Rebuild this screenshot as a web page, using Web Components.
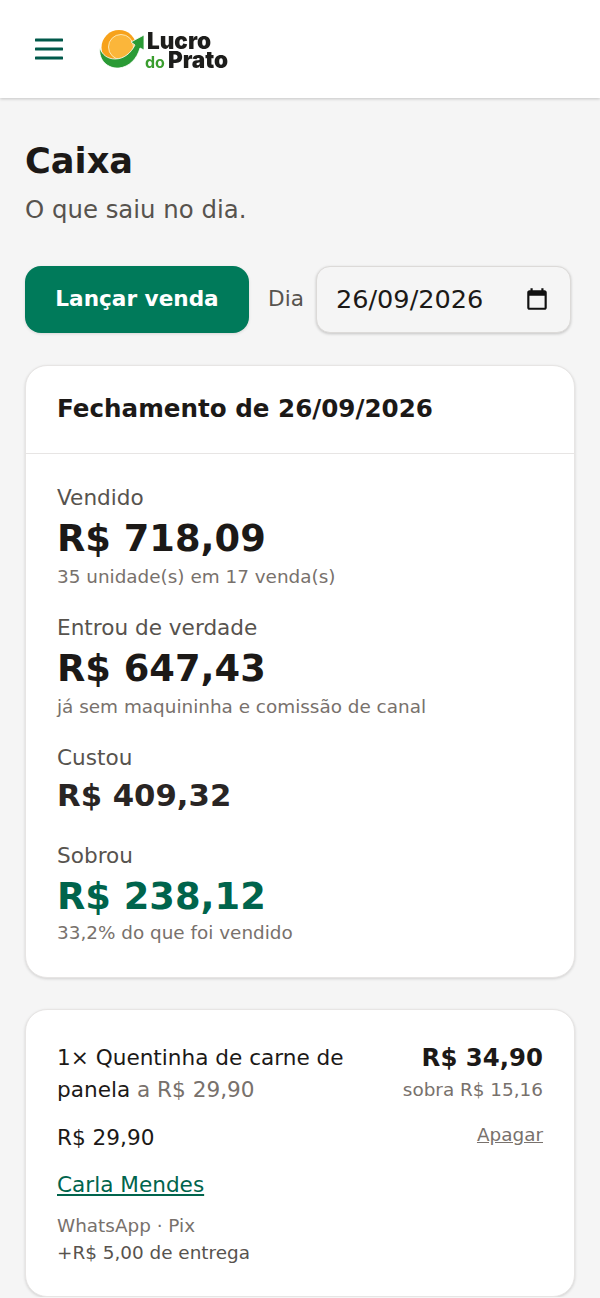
<!DOCTYPE html>
<html lang="pt-BR">
<head>
<meta charset="utf-8">
<title>Caixa</title>
<style>
  html, body { margin: 0; background: #f5f5f5; }
  body { font-family: "DejaVu Sans", sans-serif; color: #1c1917; }
</style>
</head>
<body>
<app-header></app-header>
<main-page>
  <page-title title-text="Caixa" sub="O que saiu no dia."></page-title>
  <cash-toolbar date="26/09/2026"></cash-toolbar>
  <closing-card date="26/09/2026">
    <closing-stat label="Vendido" value="R$ 718,09" note="35 unidade(s) em 17 venda(s)"></closing-stat>
    <closing-stat label="Entrou de verdade" value="R$ 647,43" note="já sem maquininha e comissão de canal"></closing-stat>
    <closing-stat label="Custou" value="R$ 409,32" kind="small"></closing-stat>
    <closing-stat label="Sobrou" value="R$ 238,12" note="33,2% do que foi vendido" kind="green"></closing-stat>
  </closing-card>
  <sale-card></sale-card>
</main-page>

<script>
class AppHeader extends HTMLElement {
    constructor() {
        super();
        this.attachShadow({ mode: 'open' });
    }

    connectedCallback() {
        this.shadowRoot.innerHTML = `
            <style>
                :host {
                    display: flex;
                    align-items: center;
                    gap: 36px;
                    height: 98px;
                    padding-left: 35px;
                    background: #fff;
                    box-shadow: 0 1px 3px rgba(0, 0, 0, .2);
                    box-sizing: border-box;
                }
                .menu { width: 28px; height: 22px; display: block; }
                .logo { display: flex; align-items: center; filter: blur(.3px); }
                .mark { width: 46px; height: 40px; flex: none; display: block; }
                .words {
                    font-family: Inter, sans-serif;
                    font-weight: 900;
                    color: #1d1d1b;
                    display: flex;
                    flex-direction: column;
                    font-size: 22.5px;
                    line-height: 19px;
                    margin-top: 5px;
                }
                .l1 { margin-left: 2px; }
                .l2 { display: flex; align-items: baseline; gap: 3px; }
                .do { color: #3a9d2e; font-size: 16px; font-weight: 700; }
            </style>
            <svg class="menu" viewBox="0 0 28 22" aria-hidden="true">
                <path d="M1 2h26M1 11h26M1 20h26" stroke="#00594a" stroke-width="3" stroke-linecap="round" fill="none"/>
            </svg>
            <div class="logo">
                <svg class="mark" viewBox="0 0 46 40" aria-hidden="true">
                    <circle cx="20" cy="18.500" r="17.500" fill="#f7a21b"/>
                    <circle cx="22" cy="18" r="12.500" fill="#fbb63a" stroke="#fde7b0" stroke-width="1"/>
                    <path d="M1 19 C-1 31 9 40 20 39 C30 38 38 30 41 19 L45 21 L45 6 L32 13 L36 16 C32 24 25 30 16 30 C9 30 3 26 1 19 Z" fill="#2a9a35" stroke="#fff" stroke-width=".8"/>
                </svg>
                <div class="words">
                    <span class="l1">Lucro</span>
                    <span class="l2"><span class="do">do</span><span>Prato</span></span>
                </div>
            </div>
        `;
    }
}

class MainPage extends HTMLElement {
    constructor() {
        super();
        this.attachShadow({ mode: 'open' });
        this.shadowRoot.innerHTML = `
            <style>
                :host {
                    display: flex;
                    flex-direction: column;
                    padding: 41px 25px 0;
                }
            </style>
            <slot></slot>
        `;
    }
}

class PageTitle extends HTMLElement {
    constructor() {
        super();
        this.attachShadow({ mode: 'open' });
    }

    connectedCallback() {
        this.shadowRoot.innerHTML = `
            <style>
                :host { display: block; margin-bottom: 40px; }
                h1 { margin: 0; font-size: 35.2px; line-height: 44px; font-weight: 700; color: #1c1917; }
                p { margin: 11px 0 0; font-size: 24.4px; line-height: 32px; color: #57534e; }
            </style>
            <h1>${this.getAttribute('title-text')}</h1>
            <p>${this.getAttribute('sub')}</p>
        `;
    }
}

class CashToolbar extends HTMLElement {
    constructor() {
        super();
        this.attachShadow({ mode: 'open' });
    }

    connectedCallback() {
        this.shadowRoot.innerHTML = `
            <style>
                :host { display: flex; align-items: center; margin-bottom: 32px; }
                .btn {
                    width: 224px;
                    height: 67px;
                    box-sizing: border-box;
                    padding-bottom: 2px;
                    display: flex;
                    align-items: center;
                    justify-content: center;
                    border-radius: 16px;
                    background: #007a5a;
                    color: #fff;
                    font-weight: 700;
                    font-size: 21.6px;
                    box-shadow: 0 1px 3px rgba(0, 0, 0, .12);
                }
                .dia { font-size: 21.6px; color: #57534e; margin: 0 12px 2px 19px; }
                .date {
                    width: 255px;
                    height: 67px;
                    box-sizing: border-box;
                    display: flex;
                    align-items: center;
                    justify-content: space-between;
                    padding: 0 21px 2px 19px;
                    border: 1px solid #dcdad8;
                    border-radius: 14px;
                    background: #f5f5f5;
                    box-shadow: 0 1px 3px rgba(0, 0, 0, .2);
                    font-size: 25.6px;
                    color: #1c1917;
                }
                svg { width: 26px; height: 26px; display: block; margin-right: -1px; }
            </style>
            <div class="btn">Lançar venda</div>
            <span class="dia">Dia</span>
            <div class="date">
                <span>${this.getAttribute('date')}</span>
                <svg viewBox="0 0 24 24" aria-hidden="true">
                    <path d="M19 4h-1V2h-2v2H8V2H6v2H5C3.900 4 3 4.900 3 6v14c0 1.100.9 2 2 2h14c1.100 0 2-.9 2-2V6c0-1.100-.9-2-2-2zm0 16H5V9h14v11z" fill="#111"/>
                </svg>
            </div>
        `;
    }
}

class ClosingCard extends HTMLElement {
    constructor() {
        super();
        this.attachShadow({ mode: 'open' });
    }

    connectedCallback() {
        this.shadowRoot.innerHTML = `
            <style>
                :host {
                    display: block;
                    background: #fff;
                    border: 1px solid #e7e5e4;
                    border-radius: 22px;
                    box-shadow: 0 1px 3px rgba(0, 0, 0, .15);
                    margin-bottom: 31px;
                }
                header {
                    height: 88px;
                    box-sizing: border-box;
                    display: flex;
                    align-items: center;
                    padding: 0 31px 2px;
                    border-bottom: 1px solid #e7e5e4;
                    font-size: 24.6px;
                    font-weight: 700;
                    color: #1c1917;
                }
                .body {
                    display: flex;
                    flex-direction: column;
                    gap: 24px;
                    padding: 29px 31px 32px;
                }
            </style>
            <header>Fechamento de ${this.getAttribute('date')}</header>
            <div class="body"><slot></slot></div>
        `;
    }
}

class ClosingStat extends HTMLElement {
    constructor() {
        super();
        this.attachShadow({ mode: 'open' });
    }

    connectedCallback() {
        const note = this.getAttribute('note');
        this.shadowRoot.innerHTML = `
            <style>
                :host { display: block; }
                .label { font-size: 21.6px; line-height: 30px; color: #57534e; }
                .value { font-size: 36.8px; line-height: 52px; font-weight: 700; color: #1c1917; }
                :host([kind="small"]) .value { font-size: 30.72px; line-height: 44px; color: #292524; }
                :host([kind="green"]) .value { color: #00644c; }
                :host([kind="green"]) .note { margin-top: -2px; }
                .note { font-size: 18.4px; line-height: 24px; color: #78716c; }
            </style>
            <div class="label">${this.getAttribute('label')}</div>
            <div class="value">${this.getAttribute('value')}</div>
            ${note ? `<div class="note">${note}</div>` : ''}
        `;
    }
}

class SaleCard extends HTMLElement {
    constructor() {
        super();
        this.attachShadow({ mode: 'open' });
    }

    connectedCallback() {
        this.shadowRoot.innerHTML = `
            <style>
                :host {
                    display: block;
                    background: #fff;
                    border: 1px solid #e7e5e4;
                    border-radius: 22px;
                    box-shadow: 0 1px 3px rgba(0, 0, 0, .15);
                    padding: 32px 31px 30px;
                }
                .row { display: flex; justify-content: space-between; gap: 32px; }
                .name { font-size: 21.6px; line-height: 31.500px; color: #1c1917; }
                .muted { color: #78716c; }
                .right { text-align: right; white-space: nowrap; flex: none; }
                .price { font-size: 24.4px; line-height: 31px; font-weight: 700; }
                .sobra { font-size: 18.4px; line-height: 33px; color: #78716c; }
                .unit { font-size: 21.6px; line-height: 32px; }
                .second { margin-top: 16px; }
                a { color: inherit; }
                .del { font-size: 18.4px; line-height: 26px; color: #78716c; text-decoration: underline; }
                .customer { margin-top: 15px; font-size: 21.6px; line-height: 32px; color: #00644c; }
                .meta { margin-top: 11px; font-size: 18.4px; line-height: 27px; color: #78716c; }
                .extra { color: #57534e; }
            </style>
            <div class="row">
                <div class="name">1× Quentinha de carne de panela <span class="muted">a R$ 29,90</span></div>
                <div class="right">
                    <div class="price">R$ 34,90</div>
                    <div class="sobra">sobra R$ 15,16</div>
                </div>
            </div>
            <div class="row second">
                <div class="unit">R$ 29,90</div>
                <a class="del">Apagar</a>
            </div>
            <div class="customer"><a style="text-decoration:underline">Carla Mendes</a></div>
            <div class="meta">WhatsApp · Pix<div class="extra">+R$ 5,00 de entrega</div></div>
        `;
    }
}

customElements.define('app-header', AppHeader);
customElements.define('main-page', MainPage);
customElements.define('page-title', PageTitle);
customElements.define('cash-toolbar', CashToolbar);
customElements.define('closing-card', ClosingCard);
customElements.define('closing-stat', ClosingStat);
customElements.define('sale-card', SaleCard);
</script>
</body>
</html>
